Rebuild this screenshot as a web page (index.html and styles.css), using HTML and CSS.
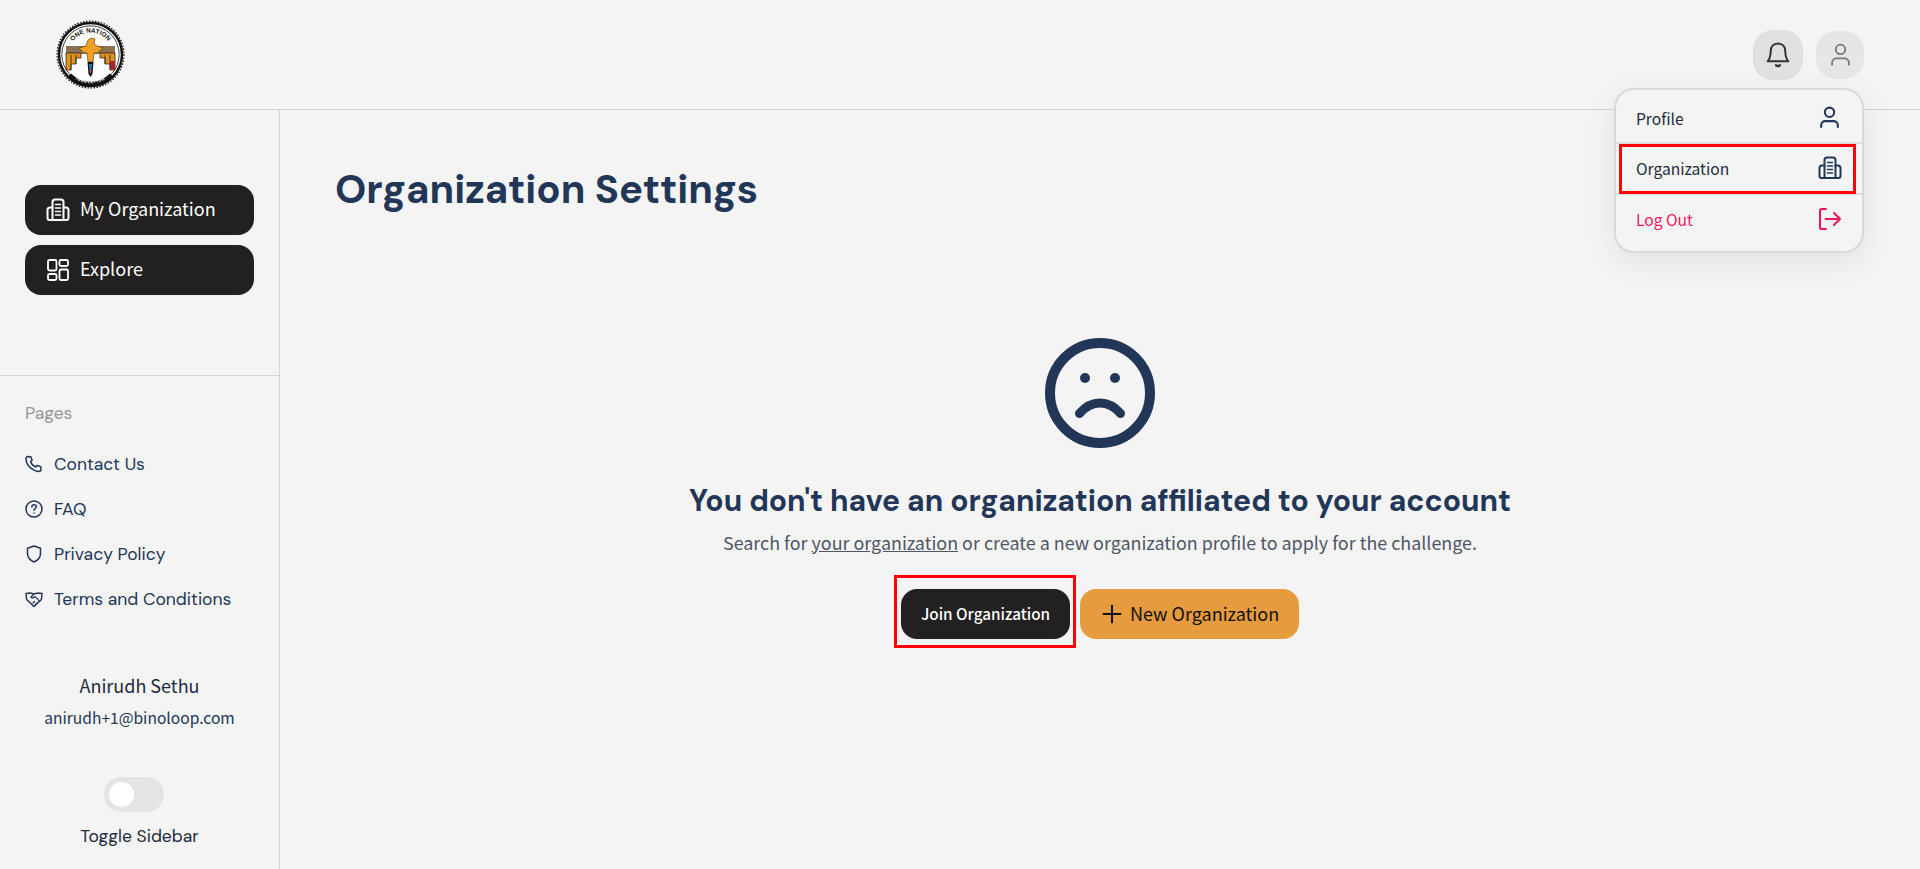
FILE: index.html
```html
<!DOCTYPE html>
<html lang="en">

<head>
    <meta charset="UTF-8">
    <meta name="viewport" content="width=device-width, initial-scale=1.0">
    <title>Organization Settings</title>
    <link rel="stylesheet" href="styles.css">
</head>

<body>

    <!-- Top Bar -->
    <header class="topbar">
        <svg class="logo" viewBox="0 0 69 69" role="img" aria-label="One Nation Innovation">
            <defs>
                <path id="logo-arc-top" d="M12.500 34.500a22 22 0 0 1 44 0" />
                <path id="logo-arc-bottom" d="M5.500 34.500a29 29 0 0 0 58 0" />
            </defs>
            <circle cx="34.500" cy="34.500" r="31.500" fill="#fff" stroke="#111" stroke-width="2.500" />
            <circle cx="34.500" cy="34.500" r="33.500" fill="none" stroke="#111" stroke-width="1.200" stroke-dasharray="1.500 1.500" />
            <circle cx="34.500" cy="34.500" r="28.700" fill="none" stroke="#111" stroke-width=".8" />
            <path d="M13.500 55a29 29 0 0 0 42 0" fill="none" stroke="#111" stroke-width="4.500" />
            <text class="logo-top"><textPath href="#logo-arc-top" startOffset="50%" text-anchor="middle">ONE NATION</textPath></text>
            <path d="M10 26h49v8h-49z" fill="#8f7154" />
            <path d="M10 33h15v5h-5v6h-5v6h-5z" fill="#e2921f" stroke="#111" stroke-width=".7" />
            <path d="M59 33h-15v5h5v6h5v6h5z" fill="#e2921f" stroke="#111" stroke-width=".7" />
            <path d="M54.500 41h4.500v9h-4.500z" fill="#b3202a" />
            <path d="M15 35v15M20 35v9M54 35v15M49 35v9" stroke="#111" stroke-width=".7" />
            <path d="M23 28l7-2 2-6 3-2 4 1-1 5 3 2 6 2-6 5h-3l-1 9h-5l-1-9h-3z" fill="#eda024" stroke="#4b3213" stroke-width=".6" />
            <path d="M31.500 42h6l-1 12-2 3-2-3z" fill="#111" />
            <path d="M33 44h3l-.5 6-1 3-1-3z" fill="#1c7fb5" />
            <path d="M33.500 50h2l-1 5z" fill="#d9442c" />
            <text class="logo-bottom"><textPath href="#logo-arc-bottom" startOffset="50%" text-anchor="middle">INNOVATION</textPath></text>
        </svg>
        <div class="topbar-actions">
            <button class="round-btn bell-btn" aria-label="Notifications">
                <svg width="30" height="30" viewBox="0 0 26 26" fill="none" stroke="#333" stroke-width="1.700" stroke-linecap="round" stroke-linejoin="round">
                    <path d="M13 3c-4 0-6.300 3-6.300 6.500 0 4.500-.7 6.700-2.700 9h18c-2-2.300-2.700-4.500-2.700-9C19.300 6 17 3 13 3z" />
                    <path d="M11.300 21.800c.9 1 2.500 1 3.400 0" stroke-width="2" />
                </svg>
            </button>
            <button class="round-btn user-btn" aria-label="Account">
                <svg width="27" height="27" viewBox="0 0 24 24" fill="none" stroke="#777" stroke-width="1.600" stroke-linecap="round">
                    <circle cx="12" cy="7.500" r="4.200" />
                    <path d="M4.500 21v-1.500c0-2.500 2-4 4-4h7c2 0 4 1.500 4 4V21" />
                </svg>
            </button>
        </div>
    </header>

    <!-- Profile Menu -->
    <div class="menu">
        <a class="menu-item menu-item-first">
            <span>Profile</span>
            <svg width="25" height="25" viewBox="0 0 24 24" fill="none" stroke="#223657" stroke-width="2" stroke-linecap="round">
                <circle cx="12" cy="7" r="4.500" />
                <path d="M4 21v-1.500c0-2.500 2-4 4-4h8c2 0 4 1.500 4 4V21" />
            </svg>
        </a>
        <a class="menu-item menu-item-marked">
            <span>Organization</span>
            <svg width="24" height="24" viewBox="0 0 24 24" fill="none" stroke="#223657" stroke-width="2" stroke-linecap="round" stroke-linejoin="round">
                <path d="M6.500 22V4c0-1.500 1-2.500 2.500-2.500h6c1.500 0 2.500 1 2.500 2.500v18" />
                <path d="M6.500 9.500H4c-1.500 0-2.500 1-2.500 2.500v8c0 1 1 2 2 2h17c1 0 2-1 2-2v-8c0-1.500-1-2.500-2.500-2.500h-2.500" />
                <path d="M9.500 6.500h5M9.500 10h5M9.500 13.500h5M9.500 17h5" stroke-width="1.500" />
            </svg>
        </a>
        <a class="menu-item menu-item-danger">
            <span>Log Out</span>
            <svg width="24" height="24" viewBox="0 0 24 24" fill="none" stroke="#f0145f" stroke-width="2" stroke-linecap="round" stroke-linejoin="round">
                <path d="M8 2H3.500C2.500 2 2 2.500 2 3.500v17c0 1 .5 1.500 1.500 1.500H8" />
                <path d="M7.500 12H22M16 6l6 6-6 6" />
            </svg>
        </a>
    </div>

    <div class="layout">

        <!-- Sidebar -->
        <aside class="sidebar">
            <nav class="side-main">
                <a class="side-btn">
                    <svg width="24" height="24" viewBox="0 0 24 24" fill="none" stroke="#fff" stroke-width="2" stroke-linecap="round" stroke-linejoin="round">
                        <path d="M6.500 22V4c0-1.500 1-2.500 2.500-2.500h6c1.500 0 2.500 1 2.500 2.500v18" />
                        <path d="M6.500 9.500H4c-1.500 0-2.500 1-2.500 2.500v8c0 1 1 2 2 2h17c1 0 2-1 2-2v-8c0-1.500-1-2.500-2.500-2.500h-2.500" />
                        <path d="M9.500 6.500h5M9.500 10h5M9.500 13.500h5M9.500 17h5" stroke-width="1.500" />
                    </svg>
                    <span>My Organization</span>
                </a>
                <a class="side-btn">
                    <svg width="24" height="24" viewBox="0 0 24 24" fill="none" stroke="#fff" stroke-width="1.800" stroke-linejoin="round">
                        <rect x="2" y="2" width="8.500" height="10.500" rx="1.500" />
                        <rect x="2" y="16" width="8.500" height="6" rx="1.500" />
                        <rect x="13.500" y="2" width="8.500" height="6" rx="1.500" />
                        <rect x="13.500" y="11.500" width="8.500" height="10.500" rx="1.500" />
                    </svg>
                    <span>Explore</span>
                </a>
            </nav>

            <div class="side-pages">
                <p class="pages-label">Pages</p>
                <a class="page-link">
                    <svg width="18" height="18" viewBox="0 0 18 18" fill="none" stroke="#223657" stroke-width="1.500" stroke-linecap="round" stroke-linejoin="round">
                        <path d="M3.500 1.500l2.300.2 1.300 3.500-1.500 1.500c.8 2.300 2.800 4.300 5.200 5.200l1.500-1.500 3.500 1.300.2 2.300c0 1.300-1 2.500-2.300 2.500C7 15.800 1 10 1 3.800 1 2.500 2.200 1.500 3.500 1.500z" />
                    </svg>
                    Contact Us
                </a>
                <a class="page-link">
                    <svg width="18" height="18" viewBox="0 0 18 18" fill="none" stroke="#223657" stroke-width="1.500" stroke-linecap="round" stroke-linejoin="round">
                        <circle cx="9" cy="9" r="8" />
                        <path d="M6.800 7c0-1.300 1-2.200 2.300-2.200 1.200 0 2.200.8 2.200 2 0 1.700-2.300 1.700-2.300 3.500" />
                        <path d="M9 13v.1" />
                    </svg>
                    FAQ
                </a>
                <a class="page-link">
                    <svg width="18" height="18" viewBox="0 0 18 18" fill="none" stroke="#223657" stroke-width="1.500" stroke-linejoin="round">
                        <path d="M9 1l6.500 2.300v5.200c0 4-2.700 6.900-6.500 8.500-3.800-1.600-6.500-4.500-6.500-8.500V3.300z" />
                    </svg>
                    Privacy Policy
                </a>
                <a class="page-link">
                    <svg width="18" height="18" viewBox="0 0 18 18" fill="none" stroke="#223657" stroke-width="1.500" stroke-linecap="round" stroke-linejoin="round">
                        <path d="M1 3.500l4-.5 4 1 4-1 4 .5-.6 6L9 16.500 1.600 9.500z" />
                        <path d="M9 4L5.800 7.200c.8 1 2 1 3 .2l1.200-.8 4 4M8 13l1.500-1.500M10.500 14.500l1.500-1.500" stroke-width="1.300" />
                    </svg>
                    Terms and Conditions
                </a>
            </div>

            <div class="side-user">
                <p class="user-name">Anirudh Sethu</p>
                <p class="user-mail">anirudh+1@binoloop.com</p>
            </div>

            <div class="side-toggle">
                <span class="toggle"><span class="toggle-knob"></span></span>
                <span class="toggle-label">Toggle Sidebar</span>
            </div>
        </aside>

        <!-- Main Content -->
        <main class="content">
            <h1>Organization Settings</h1>
            <div class="empty">
                <svg class="sad-face" width="110" height="110" viewBox="0 0 110 110" fill="none" stroke="#223657" stroke-linecap="round">
                    <circle cx="55" cy="55" r="50" stroke-width="10" />
                    <path d="M34.500 75.500C46.500 61.500 63.500 61.500 75.500 75.500" stroke-width="9" />
                    <circle cx="40" cy="40" r="5" fill="#223657" stroke="none" />
                    <circle cx="70" cy="40" r="5" fill="#223657" stroke="none" />
                </svg>
                <h2>You don't have an organization affiliated to your account</h2>
                <p class="empty-text">Search for <a>your organization</a> or create a new organization profile to apply for the challenge.</p>
                <div class="empty-actions">
                    <button class="btn btn-dark"><span>Join Organization</span></button>
                    <button class="btn btn-orange">
                        <svg width="20" height="20" viewBox="0 0 20 20" fill="none" stroke="#111" stroke-width="2" stroke-linecap="round">
                            <path d="M10 1.500v17M1.500 10h17" />
                        </svg>
                        <span>New Organization</span>
                    </button>
                </div>
            </div>
        </main>

    </div>

</body>

</html>
```

FILE: styles.css
```css
* {
    box-sizing: border-box;
}

body {
    font-family: "Noto Sans CJK SC", "Noto Sans", sans-serif;
    background-color: #f4f4f4;
    margin: 0;
    height: 869px;
    overflow: hidden;
    position: relative;
    color: #223657;
}

p,
h1,
h2 {
    margin: 0;
}

svg {
    flex: none;
}

/* Top Bar */
.topbar {
    display: flex;
    justify-content: space-between;
    align-items: center;
    height: 110px;
    padding: 0 56px;
    border-bottom: 1px solid #d4d4d4;
}

.logo {
    width: 69px;
    height: 69px;
}

.logo-top {
    font-family: "Liberation Sans", sans-serif;
    font-size: 6.500px;
    font-weight: bold;
    fill: #111;
}

.logo-bottom {
    font-family: "Liberation Sans", sans-serif;
    font-size: 3.500px;
    font-weight: bold;
    letter-spacing: 1px;
    fill: #fff;
}

.topbar-actions {
    display: flex;
    align-items: center;
    gap: 13px;
}

.round-btn {
    display: flex;
    align-items: center;
    justify-content: center;
    padding: 0;
    border: none;
    border-radius: 20px;
}

.bell-btn {
    width: 50px;
    height: 50px;
    background-color: #e0e0e0;
}

.user-btn {
    width: 48px;
    height: 48px;
    background-color: #e6e6e6;
}

/* Profile Menu */
.menu {
    position: absolute;
    top: 88px;
    left: 1614px;
    width: 250px;
    height: 165px;
    padding: 3px 0 0;
    background-color: #f4f4f4;
    border: 2px solid #d9d9d9;
    border-radius: 20px;
    box-shadow: 0 8px 30px rgba(0, 0, 0, 0.08);
}

.menu-item {
    display: flex;
    justify-content: space-between;
    align-items: center;
    height: 50px;
    padding: 0 20px;
    font-size: 15.600px;
    color: #1f2a3d;
}

.menu-item-first {
    height: 49px;
}

.menu-item-marked {
    position: relative;
    border-top: 2px solid #dcdcdc;
    border-bottom: 2px solid #dcdcdc;
    height: 53px;
    padding-bottom: 1px;
}

.menu-item-marked::after {
    content: "";
    position: absolute;
    top: 0;
    left: 3px;
    right: 6px;
    bottom: -1px;
    border: 3px solid #f00;
}

.menu-item-danger {
    height: 48px;
    color: #f0145f;
}

/* Page Layout */
.layout {
    display: flex;
    height: 759px;
}

.sidebar {
    flex: 0 0 280px;
    border-right: 1px solid #d4d4d4;
    display: flex;
    flex-direction: column;
}

.side-main {
    display: flex;
    flex-direction: column;
    gap: 10px;
    padding: 75px 25px 0;
    height: 266px;
    border-bottom: 1px solid #d4d4d4;
}

.side-btn {
    display: flex;
    align-items: center;
    gap: 10px;
    height: 50px;
    padding: 0 21px;
    background-color: #222021;
    border-radius: 16px;
    color: #fff;
    font-size: 18px;
}

.side-btn span {
    margin-top: -4px;
}

.side-pages {
    display: flex;
    flex-direction: column;
    padding: 24px 25px 0;
}

.pages-label {
    font-family: "DM Sans", "Inter", sans-serif;
    font-size: 17.500px;
    line-height: 26px;
    color: #95979c;
    margin-bottom: 15px;
}

.page-link {
    display: flex;
    align-items: center;
    gap: 11px;
    height: 45px;
    font-family: "DM Sans", "Inter", sans-serif;
    font-size: 17.500px;
    color: #223657;
}

.side-user {
    text-align: center;
    margin-top: 51px;
}

.user-name {
    font-size: 18px;
    line-height: 26px;
    color: #1f2a3d;
}

.user-mail {
    font-size: 15.600px;
    line-height: 26px;
    margin-top: 6px;
}

.side-toggle {
    display: flex;
    flex-direction: column;
    align-items: center;
    margin-top: 47px;
}

.toggle {
    display: block;
    width: 60px;
    height: 35px;
    padding: 5px;
    margin-right: 12px;
    background-color: #e4e4e6;
    border-radius: 18px;
}

.toggle-knob {
    display: block;
    width: 25px;
    height: 25px;
    background-color: #fff;
    border-radius: 50%;
}

.toggle-label {
    font-family: "DM Sans", "Inter", sans-serif;
    font-size: 17.500px;
    line-height: 26px;
    margin-top: 11px;
    color: #1f2a3d;
}

/* Main Content */
.content {
    flex: 1;
    padding: 55px 55px 0;
}

h1 {
    font-family: "DM Sans", "Inter", sans-serif;
    font-size: 40px;
    line-height: 48px;
    font-weight: 700;
    color: #223657;
}

.empty {
    display: flex;
    flex-direction: column;
    align-items: center;
    margin-top: 125px;
}

h2 {
    font-family: "DM Sans", "Inter", sans-serif;
    font-size: 30px;
    line-height: 40px;
    font-weight: 700;
    margin-top: 33px;
    color: #223657;
}

.empty-text {
    font-size: 17.920px;
    line-height: 28px;
    margin-top: 7px;
    color: #4f5666;
}

.empty-text a {
    text-decoration: underline;
}

.empty-actions {
    display: flex;
    gap: 10px;
    margin-top: 33px;
}

.btn {
    position: relative;
    display: flex;
    align-items: center;
    height: 50px;
    border: none;
    border-radius: 16px;
    font-family: "Noto Sans CJK SC", "Noto Sans", sans-serif;
}

.btn span {
    margin-top: -2px;
}

.btn-dark {
    width: 169px;
    justify-content: center;
    background-color: #222021;
    color: #fff;
    font-size: 15.300px;
    font-weight: 500;
}

.btn-dark::after {
    content: "";
    position: absolute;
    top: -14px;
    left: -7px;
    right: -6px;
    bottom: -9px;
    border: 3px solid #f00;
}

.btn-orange {
    width: 219px;
    gap: 8px;
    padding: 0 22px;
    background-color: #e79b3f;
    color: #111;
    font-size: 18px;
    white-space: nowrap;
}
```
